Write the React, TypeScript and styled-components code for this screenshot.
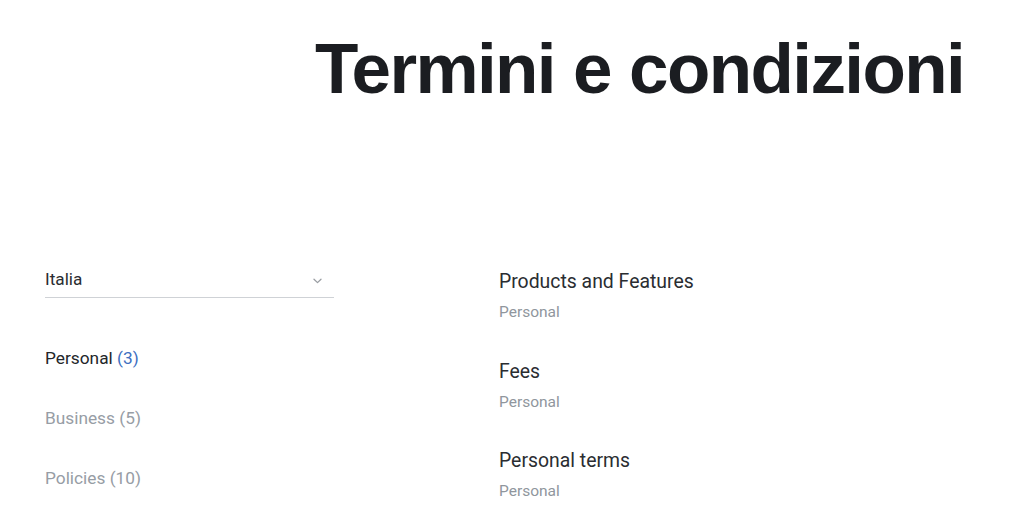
import styled, { createGlobalStyle } from 'styled-components';

const GlobalStyle = createGlobalStyle`
  html, body {
    margin: 0;
    padding: 0;
    background: #fff;
  }
  body {
    font-family: Roboto, "Liberation Sans", Arial, sans-serif;
    color: #24272b;
  }
`

interface NavEntry {
  label: string
  count: number
  active?: boolean
}

interface Document {
  title: string
  category: string
}

const categories: NavEntry[] = [
  { label: 'Personal', count: 3, active: true },
  { label: 'Business', count: 5 },
  { label: 'Policies', count: 10 },
]

const documents: Document[] = [
  { title: 'Products and Features', category: 'Personal' },
  { title: 'Fees', category: 'Personal' },
  { title: 'Personal terms', category: 'Personal' },
]

const Chevron = () => (
  <svg width="9" height="6" viewBox="0 0 9 6" fill="none">
    <path d="M1 1.2 L4.5 4.6 L8 1.2" stroke="#9a9ea3" strokeWidth="1.3" strokeLinecap="round" strokeLinejoin="round" />
  </svg>
)

export default function App() {
  return <Page>
    <GlobalStyle />
    <Header>
      <Title>Termini e condizioni</Title>
    </Header>
    <Main>
      <Sidebar>
        <CountrySelect>
          <span>Italia</span>
          <Chevron />
        </CountrySelect>
        <NavList>
          {categories.map(c => <NavItem key={c.label} $active={c.active}>
            {c.label} <Count $active={c.active}>({c.count})</Count>
          </NavItem>)}
        </NavList>
      </Sidebar>
      <DocList>
        {documents.map(d => <DocItem key={d.title}>
          <DocTitle>{d.title}</DocTitle>
          <DocCategory>{d.category}</DocCategory>
        </DocItem>)}
      </DocList>
    </Main>
  </Page>
}

const Page = styled.div`
  width: 1024px;
  min-height: 515px;
  overflow: hidden;
`

const Header = styled.header`
  padding: 33px 0 0 315px;
`

const Title = styled.h1`
  margin: 0;
  font-family: "Liberation Sans", Arial, sans-serif;
  font-weight: 700;
  font-size: 71px;
  line-height: 72px;
  letter-spacing: -1.6px;
  color: #1b1d21;
  white-space: nowrap;
`

const Main = styled.main`
  display: flex;
  margin-top: 164px;
  padding-left: 45px;
`

const Sidebar = styled.aside`
  width: 289px;
  flex-shrink: 0;
`

const CountrySelect = styled.div`
  display: flex;
  align-items: center;
  justify-content: space-between;
  padding: 0 12px 8px 0;
  border-bottom: 1px solid #cfd2d6;
  font-size: 17.2px;
  line-height: 20px;
  color: #2a2d31;

  svg {
    margin-top: 4px;
  }
`

const NavList = styled.ul`
  list-style: none;
  margin: 50px 0 0;
  padding: 0;
  display: flex;
  flex-direction: column;
  gap: 40px;
`

const NavItem = styled.li<{ $active?: boolean }>`
  font-size: 17.3px;
  line-height: 20px;
  color: ${p => p.$active ? '#23262a' : '#979da5'};
`

const Count = styled.span<{ $active?: boolean }>`
  color: ${p => p.$active ? '#3d6fc1' : 'inherit'};
`

const DocList = styled.section`
  margin: 1px 0 0 165px;
  display: flex;
  flex-direction: column;
  gap: 37.5px;
`

const DocItem = styled.div`
  display: flex;
  flex-direction: column;
  gap: 8px;
`

const DocTitle = styled.div`
  font-size: 19.4px;
  line-height: 24px;
  color: #2a2d31;
`

const DocCategory = styled.div`
  font-size: 15.5px;
  line-height: 20px;
  color: #90969d;
`
